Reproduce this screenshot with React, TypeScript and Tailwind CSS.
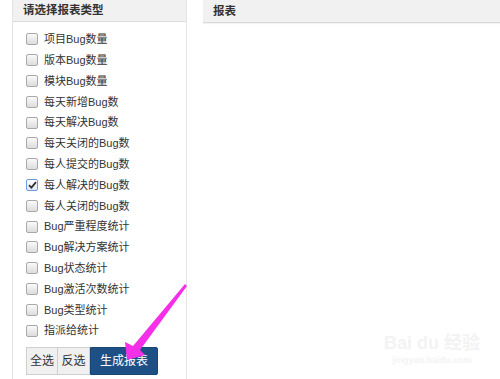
const items = [
  "项目Bug数量",
  "版本Bug数量",
  "模块Bug数量",
  "每天新增Bug数",
  "每天解决Bug数",
  "每天关闭的Bug数",
  "每人提交的Bug数",
  "每人解决的Bug数",
  "每人关闭的Bug数",
  "Bug严重程度统计",
  "Bug解决方案统计",
  "Bug状态统计",
  "Bug激活次数统计",
  "Bug类型统计",
  "指派给统计",
];

function Box({ checked }: { checked: boolean }) {
  return (
    <span
      className={`flex h-[12px] w-[12px] items-center justify-center rounded-[2px] border ${
        checked ? "border-[#6d9be0] bg-gradient-to-b from-white to-[#dfe8f5]" : "border-[#a9a9a9] bg-gradient-to-b from-[#fafafa] to-[#dcdcdc]"
      }`}
    >
      {checked && (
        <svg width="9" height="8" viewBox="0 0 9 8">
          <path d="M1 4.2 L3.4 6.6 L8 1.2" fill="none" stroke="#333" strokeWidth="1.8" />
        </svg>
      )}
    </span>
  );
}

export default function App() {
  const font = { fontFamily: '"Liberation Sans", "Noto Sans CJK SC", sans-serif' };
  return (
    <div className="relative flex h-[379px] w-[500px] overflow-hidden bg-white pl-[12px] text-[#333]" style={font}>
      <div className="flex w-[175px] flex-col border-x border-[#e4e4e4]">
        <div className="h-[22px] border-b border-[#dcdcdc] bg-[#f1f1f1] px-[10px] text-[11.5px] font-bold leading-[21px] text-[#333]">
          请选择报表类型
        </div>
        <div className="pt-[7px]">
          {items.map((t, i) => (
            <div key={t} className="flex h-[20.8px] items-center pl-[13px] text-[11px]">
              <Box checked={i === 7} />
              <span className="ml-[6px]">{t}</span>
            </div>
          ))}
        </div>
        <div className="mt-[6px] flex pl-[13px] text-[12px]">
          <button className="h-[28px] w-[32px] border border-[#cfcfcf] bg-[#f0f0f0] text-[#333]">全选</button>
          <button className="h-[28px] w-[32px] border border-l-0 border-[#cfcfcf] bg-[#f0f0f0] text-[#333]">反选</button>
          <button className="h-[28px] w-[68px] rounded-r-[2px] border border-[#1a4675] bg-[#1e4f85] text-white">生成报表</button>
        </div>
      </div>
      <div className="ml-[16px] flex-1">
        <div className="h-[23px] border-b border-[#d9d9d9] bg-[#f1f1f1] px-[10px] text-[11.5px] font-bold leading-[22px] shadow-[0_1px_1px_rgba(0,0,0,0.05)]">
          报表
        </div>
      </div>
      <div className="absolute left-[384px] top-[334px] flex flex-col items-center leading-none text-[#f3f3f3]">
        <span className="text-[18px] font-bold">Bai du 经验</span>
        <span className="mt-[4px] text-[9px] font-bold">jingyan.baidu.com</span>
      </div>
      <svg className="absolute left-0 top-0" width="500" height="379">
        <polygon
          points="127,360 125,342 133,346 185,284 187,286 140,350 145,355"
          fill="#f52ee8"
        />
      </svg>
    </div>
  );
}
